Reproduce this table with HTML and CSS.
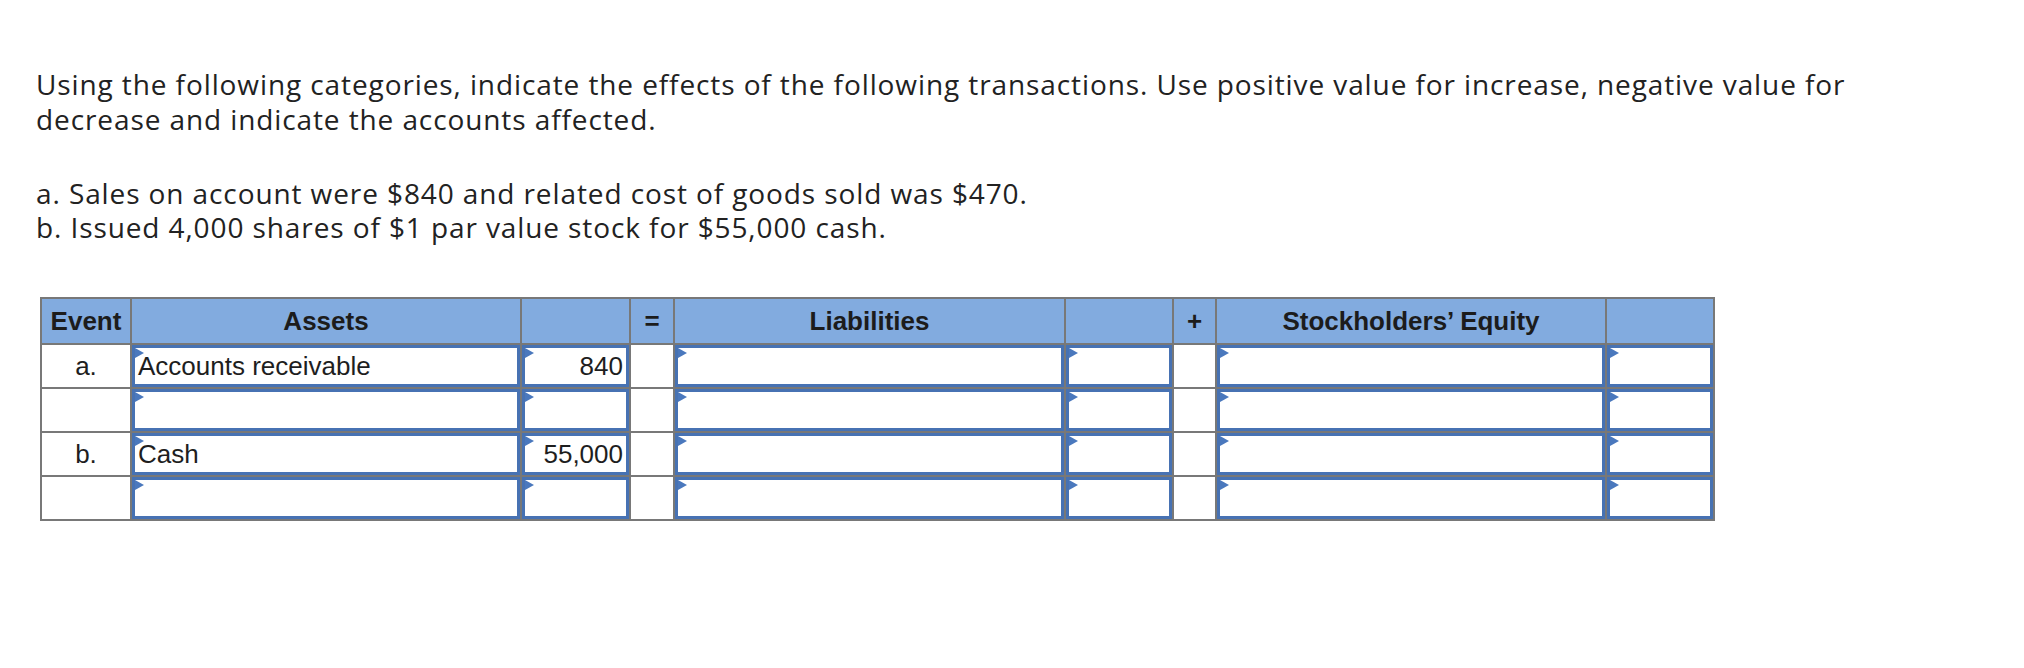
FILE: index.html
```html
<!DOCTYPE html>
<html>
<head>
<meta charset="utf-8">
<link rel="stylesheet" href="styles.css">
</head>
<body>
<div class="page">
  <p class="q">Using the following categories, indicate the effects of the following transactions. Use positive value for increase, negative value for decrease and indicate the accounts affected.</p>
  <p class="q items">a. Sales on account were $840 and related cost of goods sold was $470.<br>b. Issued 4,000 shares of $1 par value stock for $55,000 cash.</p>

  <div class="grid">
    <div class="h">Event</div>
    <div class="h">Assets</div>
    <div class="h"></div>
    <div class="h">=</div>
    <div class="h">Liabilities</div>
    <div class="h"></div>
    <div class="h">+</div>
    <div class="h">Stockholders’ Equity</div>
    <div class="h"></div>

    <div class="c ev">a.</div>
    <div class="c"><div class="in">Accounts receivable</div></div>
    <div class="c"><div class="in num">840</div></div>
    <div class="c"></div>
    <div class="c"><div class="in"></div></div>
    <div class="c"><div class="in"></div></div>
    <div class="c"></div>
    <div class="c"><div class="in"></div></div>
    <div class="c"><div class="in"></div></div>

    <div class="c ev"></div>
    <div class="c"><div class="in"></div></div>
    <div class="c"><div class="in"></div></div>
    <div class="c"></div>
    <div class="c"><div class="in"></div></div>
    <div class="c"><div class="in"></div></div>
    <div class="c"></div>
    <div class="c"><div class="in"></div></div>
    <div class="c"><div class="in"></div></div>

    <div class="c ev">b.</div>
    <div class="c"><div class="in">Cash</div></div>
    <div class="c"><div class="in num">55,000</div></div>
    <div class="c"></div>
    <div class="c"><div class="in"></div></div>
    <div class="c"><div class="in"></div></div>
    <div class="c"></div>
    <div class="c"><div class="in"></div></div>
    <div class="c"><div class="in"></div></div>

    <div class="c ev"></div>
    <div class="c"><div class="in"></div></div>
    <div class="c"><div class="in"></div></div>
    <div class="c"></div>
    <div class="c"><div class="in"></div></div>
    <div class="c"><div class="in"></div></div>
    <div class="c"></div>
    <div class="c"><div class="in"></div></div>
    <div class="c"><div class="in"></div></div>
  </div>
</div>
</body>
</html>
```

FILE: styles.css
```css
html, body {
  margin: 0;
  padding: 0;
  background: #ffffff;
}
.page {
  padding: 67px 0 0 36px;
}
.q {
  margin: 0;
  width: 1880px;
  font-family: "Open Sans", Lato, sans-serif;
  font-size: 28px;
  letter-spacing: 0.9px;
  line-height: 35px;
  color: #222222;
}
.items {
  margin-top: 39px;
  line-height: 34px;
}
.grid {
  margin: 53px 0 0 4px;
  display: grid;
  grid-template-columns: 88px 388px 107px 42px 389px 106px 41px 388px 106px;
  grid-template-rows: 44px 42px 42px 42px 42px;
  gap: 2px;
  padding: 2px;
  background: #787878;
  width: max-content;
  font-family: "Liberation Sans", Arial, sans-serif;
  font-size: 26px;
  color: #1e1e1e;
}
.h {
  background: #82abdf;
  font-weight: bold;
  display: flex;
  align-items: center;
  justify-content: center;
  color: #1c1c1c;
}
.c {
  background: #ffffff;
  display: flex;
}
.ev {
  align-items: center;
  justify-content: center;
}
.in {
  position: relative;
  flex: 1;
  border: 3px solid #4772b3;
  display: flex;
  align-items: center;
  padding: 0 3px;
  white-space: nowrap;
}
.in::before {
  content: "";
  position: absolute;
  left: 0;
  top: 0;
  border-left: 9px solid #4a78bd;
  border-top: 5px solid transparent;
  border-bottom: 5px solid transparent;
}
.num {
  justify-content: flex-end;
}
```
